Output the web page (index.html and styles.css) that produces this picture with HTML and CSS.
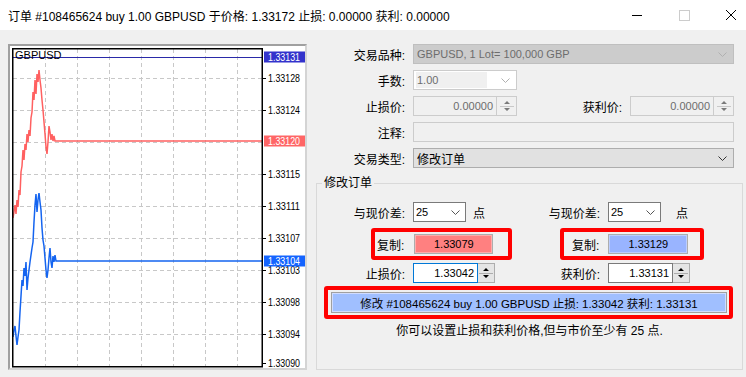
FILE: index.html
```html
<!DOCTYPE html>
<html>
<head>
<meta charset="utf-8">
<link rel="stylesheet" href="styles.css">
</head>
<body>
<div class="titlebar">
  <span class="title">订单 #108465624 buy 1.00 GBPUSD 于价格: 1.33172 止损: 0.00000 获利: 0.00000</span>
  <div class="controls">
    <div class="ctl"><svg width="12" height="12" viewBox="0 0 12 12"><path d="M1 6.5 H11" stroke="#000" stroke-width="1"/></svg></div>
    <div class="ctl"><svg width="12" height="12" viewBox="0 0 12 12"><rect x="1.5" y="1.5" width="10" height="10" fill="none" stroke="#cccccc"/></svg></div>
    <div class="ctl"><svg width="12" height="12" viewBox="0 0 12 12"><path d="M1 1 L11 11 M11 1 L1 11" stroke="#000" stroke-width="1"/></svg></div>
  </div>
</div>
<div class="main">
  <div class="chart">
    <svg width="295" height="322" viewBox="10 46 295 322">
      <g class="grid" stroke="#c8c8c8" stroke-width="1" stroke-dasharray="4 3" fill="none">
        <path d="M45.5 49 V366 M77.5 49 V366 M109.5 49 V366 M141.5 49 V366 M173.5 49 V366 M205.5 49 V366 M237.5 49 V366"/>
        <path d="M13 78.5 H262 M13 110.5 H262 M13 142.5 H262 M13 174.5 H262 M13 206.5 H262 M13 238.5 H262 M13 270.5 H262 M13 302.5 H262 M13 334.5 H262"/>
      </g>
      <path d="M12 57.5 H262" stroke="#2a2aa8" stroke-width="1"/>
      <polyline fill="none" stroke="#ff6060" stroke-width="1.5" points="13,218 14,212 15,205 16,214 17,200 18,207 19,190 20,195 21,172 22,166 23,150 24,160 25,144 26,150 27,134 28,142 29,130 30,136 31,118 32,112 33,92 34,100 35,80 36,94 37,74 38,82 39,70 40,80 41,88 42,100 43,110 44,122 45,134 46,147 47,154 48,142 49,126 50,132 51,140 52,134 53,141 54,136 55,141 262,141"/>
      <polyline fill="none" stroke="#1464f0" stroke-width="1.5" points="13,337 14,330 15,326 16,336 17,345 18,337 19,330 20,312 21,296 22,280 23,286 24,268 25,276 26,262 27,290 28,278 29,270 30,262 31,255 32,248 33,242 34,222 35,205 36,194 37,212 38,200 39,193 40,202 41,210 42,228 43,240 44,246 45,258 46,270 47,278 48,270 49,258 50,248 51,262 52,268 53,256 54,262 55,255 56,261 262,261"/>
      <text x="15" y="59" class="sym">GBPUSD</text>
      <rect x="12.75" y="48.75" width="249.5" height="318" fill="none" stroke="#000" stroke-width="1.5"/>
      <g stroke="#000" stroke-width="1">
        <path d="M262 78.5 H266 M262 110.5 H266 M262 174.5 H266 M262 206.5 H266 M262 238.5 H266 M262 270.5 H266 M262 302.5 H266 M262 334.5 H266 M262 363.5 H266"/>
      </g>
      <g class="px">
        <text x="268" y="82" textLength="32" lengthAdjust="spacingAndGlyphs">1.33128</text>
        <text x="268" y="114" textLength="32" lengthAdjust="spacingAndGlyphs">1.33124</text>
        <text x="268" y="178" textLength="32" lengthAdjust="spacingAndGlyphs">1.33115</text>
        <text x="268" y="210" textLength="32" lengthAdjust="spacingAndGlyphs">1.33111</text>
        <text x="268" y="242" textLength="32" lengthAdjust="spacingAndGlyphs">1.33107</text>
        <text x="268" y="274" textLength="32" lengthAdjust="spacingAndGlyphs">1.33103</text>
        <text x="268" y="306" textLength="32" lengthAdjust="spacingAndGlyphs">1.33098</text>
        <text x="268" y="338" textLength="32" lengthAdjust="spacingAndGlyphs">1.33094</text>
        <text x="268" y="367" textLength="32" lengthAdjust="spacingAndGlyphs">1.33090</text>
      </g>
      <rect x="264" y="51.5" width="41" height="11" fill="#3333cc"/>
      <text x="268" y="61" class="pxw" textLength="32" lengthAdjust="spacingAndGlyphs">1.33131</text>
      <rect x="264" y="135.5" width="41" height="11" fill="#ff6666"/>
      <text x="268" y="145" class="pxw" textLength="32" lengthAdjust="spacingAndGlyphs">1.33120</text>
      <rect x="264" y="255.5" width="41" height="11" fill="#1464ff"/>
      <text x="268" y="265" class="pxw" textLength="32" lengthAdjust="spacingAndGlyphs">1.33104</text>
    </svg>
  </div>
  <div class="form">
    <div class="top">
      <div class="lbl">交易品种:</div>
      <div class="ctrl span combo dis-combo"><span class="val">GBPUSD, 1 Lot= 100,000 GBP</span><svg class="chev" width="9" height="5" viewBox="0 0 9 5"><path d="M0.5 0.5 L4.5 4.5 L8.5 0.5" fill="none" stroke="#b0b0b0"/></svg></div>

      <div class="lbl">手数:</div>
      <div class="ctrl combo lots"><span class="val sel">1.00</span><svg class="chev" width="9" height="5" viewBox="0 0 9 5"><path d="M0.5 0.5 L4.5 4.5 L8.5 0.5" fill="none" stroke="#b0b0b0"/></svg></div>
      <div></div><div></div>

      <div class="lbl">止损价:</div>
      <div class="ctrl spin dis"><span class="num">0.00000</span><span class="arrows"><svg width="16" height="18" viewBox="0 0 16 18"><path d="M5 7 L8 4 L11 7 Z M5 11 L8 14 L11 11 Z" fill="#7a7a7a"/><path d="M1 9.5 H15" stroke="#c8c8c8"/></svg></span></div>
      <div class="lbl">获利价:</div>
      <div class="ctrl spin dis"><span class="num">0.00000</span><span class="arrows"><svg width="16" height="18" viewBox="0 0 16 18"><path d="M5 7 L8 4 L11 7 Z M5 11 L8 14 L11 11 Z" fill="#7a7a7a"/><path d="M1 9.5 H15" stroke="#c8c8c8"/></svg></span></div>

      <div class="lbl">注释:</div>
      <div class="ctrl span field dis"></div>

      <div class="lbl">交易类型:</div>
      <div class="ctrl span combo type"><span class="val cjk">修改订单</span><svg class="chev" width="9" height="5" viewBox="0 0 9 5"><path d="M0.5 0.5 L4.5 4.5 L8.5 0.5" fill="none" stroke="#333"/></svg></div>
    </div>

    <fieldset class="group">
      <legend>修改订单</legend>
      <div class="row">
        <div class="lbl">与现价差:</div>
        <div class="cell"><div class="combo small"><span class="val">25</span><svg class="chev" width="9" height="5" viewBox="0 0 9 5"><path d="M0.5 0.5 L4.5 4.5 L8.5 0.5" fill="none" stroke="#555"/></svg></div><span class="pt">点</span></div>
        <div class="lbl">与现价差:</div>
        <div class="cell"><div class="combo small"><span class="val">25</span><svg class="chev" width="9" height="5" viewBox="0 0 9 5"><path d="M0.5 0.5 L4.5 4.5 L8.5 0.5" fill="none" stroke="#555"/></svg></div><span class="pt pt2">点</span></div>
      </div>
      <div class="copyrow">
        <div class="redbox copy-l"><span>复制:</span><div class="btn pink">1.33079</div></div>
        <div class="redbox copy-r"><span>复制:</span><div class="btn blue">1.33129</div></div>
      </div>
      <div class="row row3">
        <div class="lbl">止损价:</div>
        <div class="cell"><div class="spin live focus"><span class="num">1.33042</span><span class="arrows"><svg width="16" height="18" viewBox="0 0 16 18"><path d="M5 7 L8 4 L11 7 Z M5 11 L8 14 L11 11 Z" fill="#000"/><path d="M1 9.5 H15" stroke="#adadad"/></svg></span></div></div>
        <div class="lbl">获利价:</div>
        <div class="cell"><div class="spin live"><span class="num">1.33131</span><span class="arrows"><svg width="16" height="18" viewBox="0 0 16 18"><path d="M5 7 L8 4 L11 7 Z M5 11 L8 14 L11 11 Z" fill="#000"/><path d="M1 9.5 H15" stroke="#adadad"/></svg></span></div></div>
      </div>
      <div class="redbox big"><div class="btn bigbtn">修改 #108465624 buy 1.00 GBPUSD 止损: 1.33042 获利: 1.33131</div></div>
      <div class="note">你可以设置止损和获利价格,但与市价至少有 25 点.</div>
    </fieldset>
  </div>
</div>
</body>
</html>
```

FILE: styles.css
```css
* { box-sizing: border-box; }
html, body { margin: 0; padding: 0; }
body {
  width: 746px;
  height: 377px;
  overflow: hidden;
  background: #f0f0f0;
  font-family: "Liberation Sans", "Noto Sans CJK SC", sans-serif;
  font-size: 12px;
  color: #000;
}
.titlebar {
  height: 30px;
  background: #fff;
  display: flex;
  align-items: center;
  overflow: hidden;
}
.title {
  flex: 1;
  padding-left: 8px;
  font-size: 12px;
  white-space: nowrap;
}
.controls { display: flex; height: 30px; margin-right: -8px; }
.ctl { width: 47px; display: flex; align-items: center; justify-content: center; }

.main { display: flex; padding: 14px 0 0 8px; }
.chart {
  width: 299px;
  height: 326px;
  background: #fff;
  border: 2px solid #a0a0a0;
  border-right-color: #d4d4d4;
  border-bottom-color: #d4d4d4;
}
.chart svg { display: block; }
.sym { font-family: "Liberation Sans", sans-serif; font-size: 11px; fill: #000; }
.px text { font-family: "Liberation Sans", sans-serif; font-size: 11px; fill: #000; }
.pxw { font-family: "Liberation Sans", sans-serif; font-size: 11px; fill: #fff; }

.form { margin-left: 3px; width: 433px; }
.top {
  display: grid;
  grid-template-columns: 95px 112px 105px 112px;
  grid-auto-rows: 20px;
  row-gap: 6px;
  width: 424px;
}
.lbl {
  display: flex;
  align-items: center;
  justify-content: flex-end;
  white-space: nowrap;
}
.ctrl { margin-left: 8px; }
.span { grid-column: 2 / 5; }

.combo {
  display: flex;
  align-items: center;
  height: 20px;
  border: 1px solid #7a7a7a;
  background: #fff;
  padding: 0 6px 0 3px;
}
.combo .val { flex: 1; white-space: nowrap; overflow: hidden; font-size: 11px; }
.combo .val.cjk { font-size: 12px; }
.combo .chev { flex: none; }
.dis-combo { background: #cccccc; border-color: #bfbfbf; color: #6d6d6d; }
.lots { border-color: #cccccc; padding-left: 2px; }
.lots .val { background: #f0f0f0; color: #6d6d6d; height: 16px; line-height: 16px; padding-left: 1px; margin-right: 14px; }
.type { background: #e1e1e1; border-color: #adadad; }
.field { height: 20px; border: 1px solid #cccccc; background: #f0f0f0; }

.spin { display: flex; height: 20px; }
.spin .num {
  flex: 1;
  display: flex;
  align-items: center;
  justify-content: flex-end;
  padding-right: 3px;
  border: 1px solid #7a7a7a;
  background: #fff;
  font-size: 11px;
}
.spin .arrows {
  width: 17px;
  display: flex;
  align-items: center;
  justify-content: center;
  border: 1px solid #adadad;
  border-left: none;
  background: #e5e5e5;
}
.spin.dis .num { background: #f0f0f0; border-color: #cccccc; color: #6d6d6d; }
.spin.dis .arrows { background: #f0f0f0; border-color: #cccccc; width: 20px; }
.spin.focus .num { border-color: #0078d7; }

.group {
  margin: 7px 0 0 6px;
  padding: 11px 0 0 0;
  width: 427px;
  height: 195px;
  border: 1px solid #d9d9d9;
  min-width: 0;
}
.group legend {
  margin-left: 5px;
  padding: 0 2px;
  line-height: 16px;
  font-size: 12px;
}
.row {
  display: grid;
  grid-template-columns: 88px 125px 70px 142px;
  height: 20px;
}
.cell { display: flex; align-items: center; padding-left: 8px; }
.combo.small { width: 53px; padding-left: 2px; padding-right: 5px; }
.pt { margin-left: 7px; }
.pt2 { margin-left: 15px; }
.row3 { margin-top: 3px; }
.row3 .spin { width: 82px; }

.copyrow { display: flex; margin-top: 6px; height: 32px; }
.redbox {
  border: 4px solid #ff0000;
  border-radius: 3px;
  display: flex;
  align-items: center;
}
.copy-l { margin-left: 54px; width: 141px; padding-left: 2px; }
.copy-r { margin-left: 48px; width: 144px; padding-left: 8px; }
.btn {
  height: 20px;
  display: flex;
  align-items: center;
  justify-content: center;
  border: 1px solid #adadad;
  box-shadow: inset 0 0 0 1px rgba(255,255,255,0.35);
  font-size: 11px;
}
.copy-l .btn { margin-left: 10px; width: 79px; }
.copy-r .btn { margin-left: 9px; width: 80px; }
.pink { background: #ff8080; }
.blue { background: #99b4ff; }

.big {
  margin: 3px 0 0 7px;
  width: 409px;
  height: 33px;
  padding: 2px 2px 2px 3px;
}
.bigbtn {
  width: 100%;
  height: 21px;
  background: #a0bfff;
  border-color: #a0a0a0;
  box-shadow: inset 0 0 0 1px #d0dcff;
  white-space: nowrap;
  font-size: 11.5px;
}
.note {
  margin-top: 4px;
  text-align: center;
  line-height: 16px;
}
```
